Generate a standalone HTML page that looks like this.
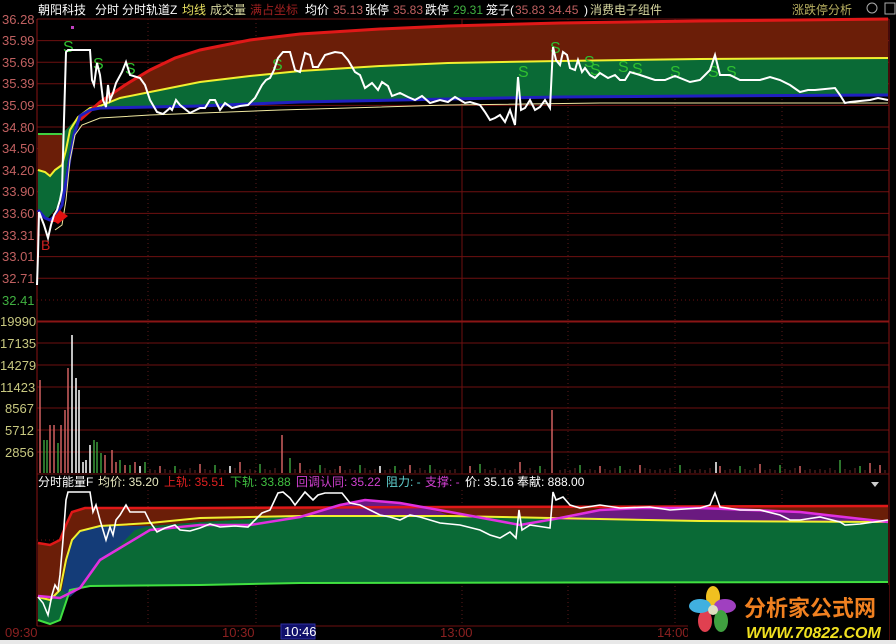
<!DOCTYPE html>
<html><head><meta charset="utf-8"><style>
html,body{margin:0;padding:0;background:#fff;width:896px;height:644px;overflow:hidden}
svg{display:block}
text{font-family:"Liberation Sans","Noto Sans CJK SC",sans-serif}
</style></head><body>
<svg width="896" height="644" viewBox="0 0 896 644" font-size="12">
<rect x="0" y="0" width="896" height="641" fill="#000"/>
<!-- grid -->
<g stroke="#6e1010" stroke-width="1">
<path d="M37 19H889M37 40.6H889M37 62.2H889M37 83.8H889M37 105.4H889M37 127H889M37 148.6H889M37 170.2H889M37 191.8H889M37 213.4H889M37 235H889M37 256.6H889M37 278.2H889"/>
<path d="M37 343H889M37 365H889M37 387H889M37 408H889M37 430H889M37 452H889"/>
<path d="M37 474H889M37 626H889"/>
<path d="M462 19V474"/>
</g>
<path d="M37 321.5H889" stroke="#8a1515" stroke-width="2"/>
<path d="M37 300H889M37 540H889" stroke="#6e1010" stroke-dasharray="1,3"/>
<g stroke="#5a1a1a" stroke-dasharray="1,3">
<path d="M148 19V474M256 19V474M568 19V474M675 19V474M782 19V474M148 490V626M256 490V626M462 490V626M568 490V626M675 490V626M782 490V626"/>
</g>
<path d="M37 19V626" stroke="#8a1515"/>
<path d="M889 19V640" stroke="#8a1515"/>

<!-- main bands -->
<path d="M62 134 L80 120 L100 102 L125 85 L150 70 L175 58 L200 50 L250 40 L300 34 L380 29 L448 26 L560 23 L700 21 L888 19 L888 58 L700 59 L560 61 L448 63 L380 66 L300 71 L250 76 L200 82 L150 92 L120 98 L100 106 L80 115 L62 134 Z" fill="#6b1e08"/>
<path d="M62 134 L80 115 L100 106 L120 98 L150 92 L200 82 L250 76 L300 71 L380 66 L448 63 L560 61 L700 59 L888 58 L888 95 L700 96 L560 97 L448 99 L300 102 L200 106 L100 108 L85 112 L75 125 L68 160 L62 200 Z" fill="#0a6a36"/>
<path d="M38 134 L62 134 L62 165 L55 170 L50 176 L45 172 L38 170 Z" fill="#6b1e08"/>
<path d="M38 170 L45 172 L50 176 L55 170 L62 165 L62 200 L55 210 L48 218 L42 215 L38 212 Z" fill="#0a6a36"/>
<path d="M38 134 H62" stroke="#40d040" stroke-width="2"/>
<path d="M38 170 L45 172 L50 176 L55 170 L62 165 L66 150 L70 130 L78 117 L90 108 L100 106 L120 98 L150 92 L200 82 L250 76 L300 71 L380 66 L448 63 L560 61 L700 59 L888 58" fill="none" stroke="#f0f030" stroke-width="2"/>
<path d="M80 120 L100 102 L125 85 L150 70 L175 58 L200 50 L250 40 L300 34 L380 29 L448 26 L560 23 L700 21 L888 19" fill="none" stroke="#e01818" stroke-width="3"/>
<path d="M38 210 L45 218 L50 220 L56 215 L62 205 L68 170 L74 135 L80 116 L90 110 L100 108 L200 106 L300 102 L448 99 L560 97 L700 96 L888 95" fill="none" stroke="#2020c0" stroke-width="3"/>
<path d="M55 230 L62 225 L66 200 L70 160 L75 135 L82 125 L100 118 L150 115 L280 110 L448 105 L600 103 L888 103" fill="none" stroke="#f0e8a0" stroke-width="1"/>
<polygon points="52,220 62,212 68,216 58,224" fill="#e01010"/>
<polygon points="60,210 64,214 56,222 50,222" fill="#e01010"/>
<text x="41" y="250" fill="#d02020" font-size="14">B</text>
<rect x="71" y="26" width="3" height="3" fill="#c040c0"/>
<g fill="#30c030" font-size="16">
<text x="63" y="52">S</text><text x="93" y="69">S</text><text x="125" y="74">S</text><text x="272" y="70">S</text>
<text x="518" y="77">S</text><text x="550" y="53">S</text><text x="584" y="67">S</text><text x="590" y="75">S</text>
<text x="618" y="72">S</text><text x="632" y="74">S</text><text x="670" y="77">S</text><text x="708" y="77">S</text><text x="726" y="77">S</text>
</g>
<polyline fill="none" stroke="#fff" stroke-width="2" points="37,285 38,255 39,212 44,225 48,238 51,225 54,215 57,210 60,200 62,190 64,120 66,52 68,50 90,50 92,80 94,85 97,63 100,75 103,100 106,107 108,85 110,100 113,93 116,83 122,72 126,62 130,75 140,78 145,85 150,100 157,112 163,114 170,108 172,110 176,100 180,105 190,113 200,108 205,108 210,100 215,100 220,110 225,103 232,108 240,106 248,105 255,98 262,85 266,80 270,78 274,70 278,58 283,52 290,52 295,70 300,72 305,53 310,55 313,67 318,67 325,55 335,52 342,53 348,60 355,72 360,75 365,88 372,83 378,90 382,82 388,86 392,96 400,93 408,97 415,100 422,96 430,103 440,100 448,102 455,97 465,103 470,102 480,105 485,112 490,120 495,118 500,115 505,122 510,110 515,125 518,77 521,110 525,108 530,100 535,110 540,107 545,100 550,108 553,47 556,60 560,65 563,52 567,55 570,68 575,70 578,60 582,72 585,68 590,75 595,78 600,73 608,78 615,75 620,80 625,80 630,72 640,75 655,80 665,80 675,76 690,82 700,80 705,75 710,70 715,55 720,75 730,75 740,80 760,80 770,77 780,80 790,85 800,92 808,90 815,90 835,88 840,95 845,103 850,102 870,100 878,98 888,100"/>

<!-- volume -->
<g stroke-width="1.5">
<path stroke="#d06060" d="M40 473V380M50 473V425M54 473V425M61 473V425M65 473V410M68 473V368M105 473V455M112 473V450M116 473V462M282 473V435M552 473V410M125 473V465M135 473V462M160 473V466M200 473V464M240 473V462M300 473V463M340 473V466M410 473V465M470 473V466M520 473V462M600 473V466M640 473V465M720 473V466M760 473V464M800 473V466M870 473V463M880 473V465"/>
<path stroke="#3a9a3a" d="M44 473V440M47 473V440M58 473V443M94 473V440M97 473V442M101 473V453M120 473V460M130 473V465M145 473V462M175 473V466M215 473V465M260 473V464M290 473V458M320 473V465M360 473V465M395 473V466M430 473V465M480 473V464M540 473V466M580 473V465M620 473V466M680 473V465M740 473V466M780 473V465M840 473V460M860 473V466"/>
<path stroke="#fff" d="M72 473V335M76 473V378M79 473V390M83 473V462M86 473V460M90 473V445M140 473V466M230 473V466M380 473V466M716 473V462"/>
<path stroke="#6a2a2a" stroke-width="1" d="M150 473V469M155 473V470M165 473V469M170 473V470M180 473V469M185 473V470M190 473V468M195 473V470M205 473V469M210 473V470M220 473V469M225 473V470M235 473V468M245 473V470M250 473V469M255 473V470M265 473V469M270 473V470M275 473V468M295 473V469M305 473V470M310 473V469M315 473V470M325 473V468M330 473V470M335 473V469M345 473V470M350 473V469M355 473V470M365 473V468M370 473V470M375 473V469M385 473V470M390 473V469M400 473V470M405 473V469M415 473V470M420 473V468M425 473V470M435 473V469M440 473V470M445 473V469M450 473V470M455 473V469M475 473V470M485 473V469M490 473V470M495 473V468M500 473V470M505 473V469M510 473V470M515 473V469M525 473V470M530 473V468M535 473V470M545 473V469M560 473V470M565 473V469M570 473V470M575 473V468M585 473V470M590 473V469M595 473V470M605 473V469M610 473V470M615 473V468M625 473V470M630 473V469M635 473V470M645 473V468M650 473V469M655 473V470M660 473V469M665 473V470M670 473V468M685 473V470M690 473V469M695 473V470M700 473V469M705 473V470M710 473V468M725 473V470M730 473V469M735 473V470M745 473V469M750 473V470M755 473V468M765 473V470M770 473V469M775 473V470M785 473V469M790 473V470M795 473V468M805 473V470M810 473V469M815 473V470M820 473V469M825 473V470M830 473V468M835 473V470M845 473V469M850 473V470M855 473V468M865 473V470M875 473V469M885 473V470"/>
</g>

<!-- sub chart -->
<path d="M38 543 L50 545 L60 540 L66 525 L72 512 L85 508 L200 508 L450 507 L888 506 L888 522 L700 521 L450 516 L300 516 L200 522 L150 526 L100 526 L80 531 L70 545 L62 590 L50 600 L38 597 Z" fill="#6b1e08"/>
<path d="M38 597 L50 600 L62 590 L70 545 L80 531 L100 526 L150 526 L200 522 L300 516 L450 516 L700 521 L888 522 L888 582 L300 583 L200 585 L90 586 L70 590 L60 620 L50 624 L38 620 Z" fill="#0a6a36"/>
<path d="M62 590 L70 545 L80 531 L100 526 L150 526 L135 530 L120 545 L100 560 L80 588 L70 597 Z" fill="#143c78"/>
<path d="M300 516 L340 505 L365 500 L400 503 L440 512 L450 516 Z" fill="#6a1a80"/>
<path d="M560 520 L600 510 L640 508 L700 508 L800 512 L888 522 L700 521 Z" fill="#6a1a80"/>
<path d="M38 620 L50 624 L60 620 L70 590 L90 586 L200 585 L300 583 L888 582" fill="none" stroke="#40e040" stroke-width="2"/>
<path d="M38 597 L50 600 L60 590 L66 560 L72 540 L80 531 L100 526 L150 523 L200 518 L300 516 L450 516 L700 521 L888 522" fill="none" stroke="#f0f030" stroke-width="2"/>
<path d="M38 543 L50 545 L60 540 L66 525 L72 512 L85 508 L200 508 L450 507 L888 506" fill="none" stroke="#e01818" stroke-width="2.5"/>
<path d="M38 596 L60 598 L80 588 L100 560 L120 548 L150 530 L200 525 L250 525 L300 517 L340 505 L365 500 L400 503 L450 512 L520 525 L560 518 L600 510 L640 508 L700 508 L800 512 L888 522" fill="none" stroke="#e030e0" stroke-width="2.5"/>
<polyline fill="none" stroke="#fff" stroke-width="1.6" points="38,597 43,603 48,615 52,595 55,585 58,590 60,575 63,540 66,500 68,492 90,492 93,512 96,505 100,520 106,540 110,527 113,535 116,520 120,515 126,505 130,512 145,512 150,522 157,532 165,528 175,525 180,530 190,531 200,528 210,524 220,527 235,526 248,527 255,520 262,513 270,510 278,493 283,492 290,498 295,505 305,492 313,500 318,495 325,493 342,493 350,503 360,505 370,510 380,515 390,517 400,520 410,515 420,517 440,523 460,525 480,530 490,535 500,538 510,532 516,538 519,510 522,530 530,525 550,528 553,492 556,500 563,497 570,505 580,508 600,505 620,508 650,507 670,510 700,508 710,505 715,493 720,507 740,510 760,510 780,515 790,520 800,520 820,517 840,522 845,525 860,524 888,520"/>
<polygon points="871,482 879,482 875,487" fill="#ccc"/>

<!-- top bar -->
<g font-size="12">
<text x="38" y="14" fill="#fff">朝阳科技</text>
<text x="95" y="14" fill="#fff">分时</text>
<text x="122" y="14" fill="#fff">分时轨道Z</text>
<text x="182" y="14" fill="#e8e060">均线</text>
<text x="210" y="14" fill="#d8d8a0">成交量</text>
<text x="250" y="14" fill="#a02020">满占坐标</text>
<text x="305" y="14" fill="#fff">均价</text>
<text x="333" y="14" fill="#c06060">35.13</text>
<text x="365" y="14" fill="#fff">张停</text>
<text x="393" y="14" fill="#c06060">35.83</text>
<text x="425" y="14" fill="#fff">跌停</text>
<text x="453" y="14" fill="#40b040">29.31</text>
<text x="486" y="14" fill="#fff">笼子(</text>
<text x="515" y="14" fill="#c06060">35.83 34.45</text>
<text x="584" y="14" fill="#fff">)</text>
<text x="590" y="14" fill="#d8d8a0">消费电子组件</text>
<text x="792" y="14" fill="#b8b060">涨跌停分析</text>
</g>
<circle cx="872" cy="8" r="5" fill="none" stroke="#aaa"/>
<rect x="885" y="3" width="10" height="11" fill="none" stroke="#aaa"/>
<!-- left axis -->
<g font-size="13" fill="#c06060">
<text x="2" y="24">36.28</text><text x="2" y="45">35.99</text><text x="2" y="67">35.69</text><text x="2" y="88">35.39</text>
<text x="2" y="110">35.09</text><text x="2" y="132">34.80</text><text x="2" y="153">34.50</text><text x="2" y="175">34.20</text>
<text x="2" y="196">33.90</text><text x="2" y="218">33.60</text><text x="2" y="240">33.31</text><text x="2" y="261">33.01</text>
<text x="2" y="283">32.71</text>
</g>
<text x="2" y="305" fill="#40b040" font-size="13">32.41</text>
<g fill="#c8c880" font-size="13">
<text x="0" y="326">19990</text><text x="0" y="348">17135</text><text x="0" y="370">14279</text><text x="0" y="392">11423</text>
<text x="5" y="413">8567</text><text x="5" y="435">5712</text><text x="5" y="457">2856</text>
</g>
<!-- sub header -->
<g font-size="12">
<text x="38" y="486" fill="#fff">分时能量F</text>
<text x="98" y="486" fill="#e8e8c0">均价: 35.20</text>
<text x="164" y="486" fill="#e02020">上轨: 35.51</text>
<text x="230" y="486" fill="#40c040">下轨: 33.88</text>
<text x="296" y="486" fill="#d040d0">回调认同: 35.22</text>
<text x="386" y="486" fill="#60d0d0">阻力: -</text>
<text x="425" y="486" fill="#d040d0">支撑: -</text>
<text x="465" y="486" fill="#fff">价: 35.16</text>
<text x="517" y="486" fill="#fff">奉献: 888.00</text>
</g>
<!-- time axis -->
<g font-size="13" fill="#8a2020">
<text x="5" y="637">09:30</text><text x="222" y="637">10:30</text><text x="440" y="637">13:00</text><text x="657" y="637">14:00</text>
</g>
<rect x="281" y="624" width="34" height="15" fill="#10106a" stroke="#3030a0"/>
<text x="284" y="636" fill="#fff" font-size="13">10:46</text>
<!-- logo -->
<rect x="688" y="585" width="201" height="56" fill="#000"/>
<g transform="translate(713,610)">
<ellipse cx="0" cy="-13" rx="7" ry="11" fill="#f0c020"/>
<ellipse cx="12" cy="-4" rx="11" ry="7" fill="#a040c0"/>
<ellipse cx="8" cy="11" rx="7" ry="11" fill="#40a040"/>
<ellipse cx="-8" cy="11" rx="7" ry="11" fill="#e04050"/>
<ellipse cx="-13" cy="-4" rx="11" ry="7" fill="#40b0e0"/>
<circle cx="0" cy="0" r="5" fill="#e0e0c0"/>
</g>
<text x="744" y="616" fill="#f08020" font-size="22" font-weight="bold">分析家公式网</text>
<text x="746" y="638" fill="#f0e020" font-size="16" font-weight="bold" font-style="italic">WWW.70822.COM</text>
<rect x="0" y="640" width="896" height="4" fill="#e8e8e8"/>
</svg>
</body></html>
